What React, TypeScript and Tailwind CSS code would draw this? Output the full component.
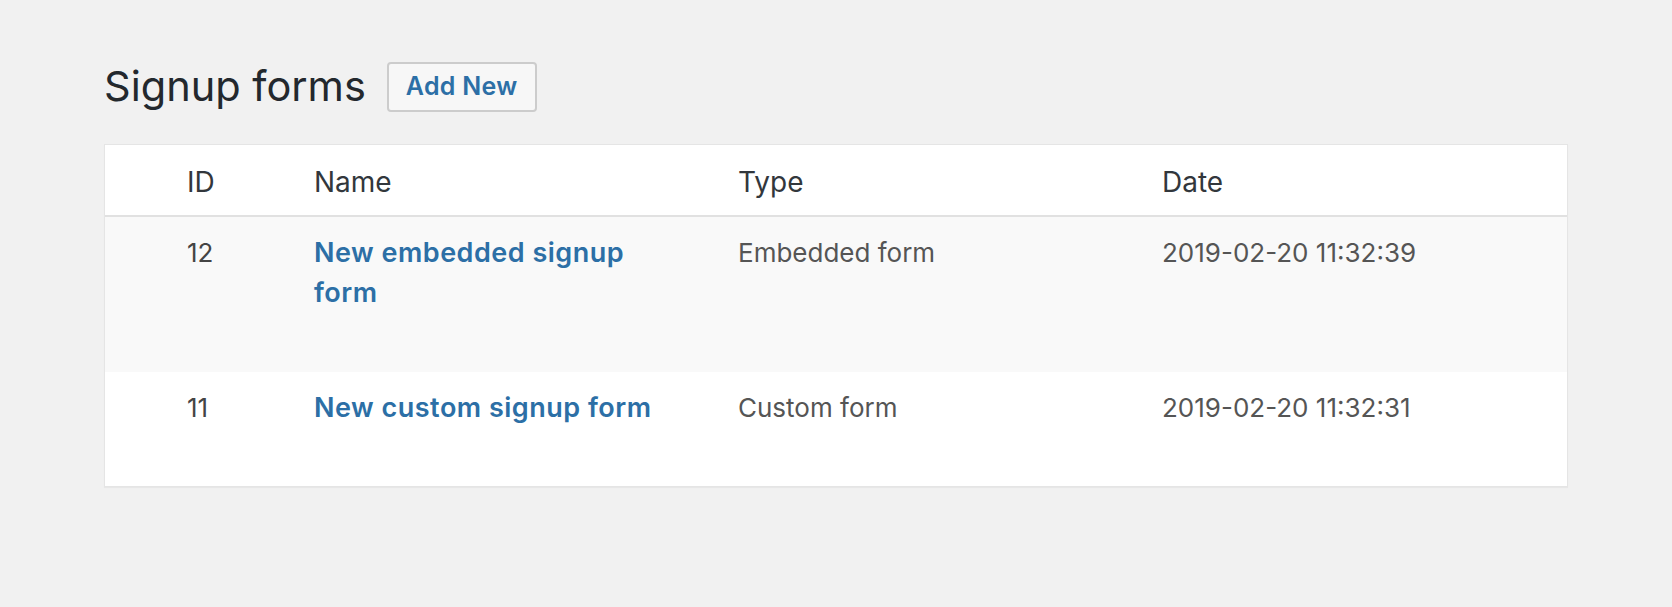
import * as React from "react";

interface FormRow {
  id: number;
  name: string;
  type: string;
  date: string;
}

const rows: FormRow[] = [
  { id: 12, name: "New embedded signup form", type: "Embedded form", date: "2019-02-20 11:32:39" },
  { id: 11, name: "New custom signup form", type: "Custom form", date: "2019-02-20 11:32:31" },
];

const font = { fontFamily: "Inter, 'Noto Sans', 'Liberation Sans', sans-serif" };

export default function App() {
  return (
    <div className="min-h-[607px] w-full bg-[#f1f1f1] px-[104px] pt-[58px] text-[#444]" style={font}>
      {/* heading */}
      <div className="flex items-center gap-[21px]">
        <h1 className="text-[41.5px] leading-[57px] font-normal text-[#23282d]">Signup forms</h1>
        <button
          type="button"
          className="h-[50px] rounded-[4px] border-2 border-[#cccccc] bg-[#f7f7f7] px-[17px] text-[25px] font-semibold tracking-[0.3px] text-[#2c6fa6]"
        >
          Add New
        </button>
      </div>

      {/* list table */}
      <div className="mt-[29px] border border-[#e5e5e5] bg-white shadow-[0_1px_1px_rgba(0,0,0,0.04)]">
        <div className="grid grid-cols-[209px_424px_424px_1fr] border-b-2 border-[#e1e1e1] pt-[17px] pb-[13px] text-[28px] leading-[40px] text-[#32373c]">
          <div className="pl-[82px]">ID</div>
          <div>Name</div>
          <div>Type</div>
          <div>Date</div>
        </div>
        {rows.map((r, i) => (
          <div
            key={r.id}
            className={
              "grid grid-cols-[209px_424px_424px_1fr] pt-[16px] text-[26px] leading-[40px] " +
              (i % 2 === 0 ? "bg-[#f9f9f9] pb-[59px]" : "bg-white pb-[58px]")
            }
          >
            <div className="pl-[82px]">{r.id}</div>
            <div className="pr-[64px]">
              <a href="#" className="text-[27px] font-semibold tracking-[0.5px] text-[#2c6fa6]">
                {r.name}
              </a>
            </div>
            <div className="text-[#555]">{r.type}</div>
            <div className="text-[#555]">{r.date}</div>
          </div>
        ))}
      </div>
    </div>
  );
}
